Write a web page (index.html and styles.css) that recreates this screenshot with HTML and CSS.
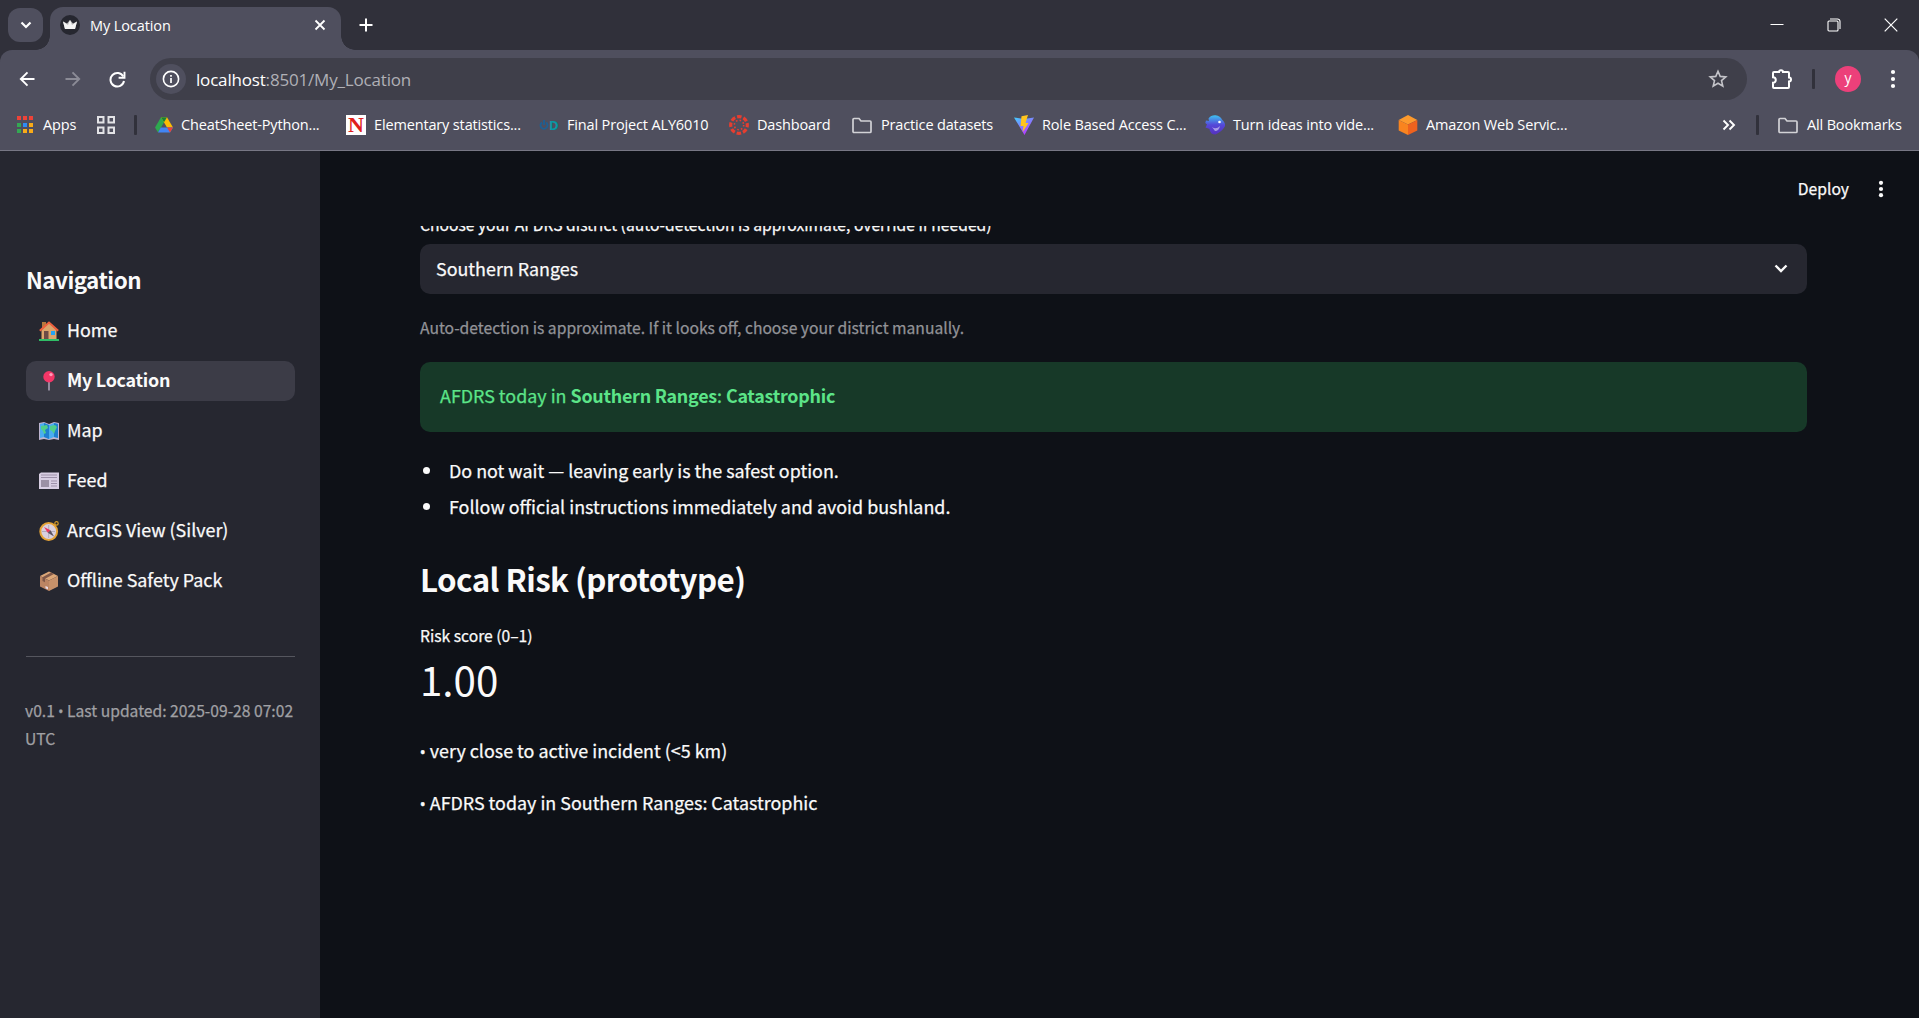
FILE: index.html
```html
<!DOCTYPE html>
<html lang="en">
<head>
<meta charset="utf-8">
<title>My Location</title>
<link rel="stylesheet" href="styles.css">
</head>
<body>
<div class="browser">
  <div class="tabstrip">
    <div class="tabsearch"><svg width="12" height="8" viewBox="0 0 12 8"><path d="M1.5 1.5 6 6l4.500-4.500" fill="none" stroke="#fff" stroke-width="2.200"/></svg></div>
    <div class="tab">
      <svg class="favicon" width="20" height="20" viewBox="0 0 20 20"><circle cx="10" cy="10" r="10" fill="#262730"/><path d="M3 6.500l4 2 3-3.500 3 3.500 4-2-2 7.500H5z" fill="#bbb"/><path d="M3 6.500L8 10l2-5 2 5 5-3.500-2 7.500H5z" fill="#f4f4f4"/></svg>
      <span class="tabtitle">My Location</span>
      <svg class="tabclose" width="12" height="12" viewBox="0 0 12 12"><path d="M1.500 1.500l9 9M10.500 1.500l-9 9" stroke="#fff" stroke-width="1.800"/></svg>
    </div>
    <svg class="newtab" width="14" height="14" viewBox="0 0 14 14"><path d="M7 .5v13M.5 7h13" stroke="#fff" stroke-width="2"/></svg>
    <div class="winctl">
      <svg width="14" height="14" viewBox="0 0 14 14"><path d="M.5 6.500h13" stroke="#fff"/></svg>
      <svg width="14" height="14" viewBox="0 0 14 14"><rect x="1" y="3" width="10" height="10" rx="1" fill="none" stroke="#fff" stroke-width="1.100"/><path d="M3 1h7.500a2.500 2.500 0 0 1 2.500 2.500V11" fill="none" stroke="#fff" stroke-width="1.100"/></svg>
      <svg width="14" height="14" viewBox="0 0 14 14"><path d="M.7.7l12.600 12.600M13.300.7L.7 13.300" stroke="#fff" stroke-width="1.200"/></svg>
    </div>
  </div>
  <div class="toolbar">
    <svg class="back" width="16" height="16" viewBox="0 0 16 16"><path d="M15.500 8H2M8.500 1.300L1.800 8l6.700 6.700" fill="none" stroke="#fff" stroke-width="1.900"/></svg>
    <svg class="forward" width="16" height="16" viewBox="0 0 16 16"><path d="M.5 8H14M7.500 1.300L14.200 8l-6.700 6.700" fill="none" stroke="#8b8b96" stroke-width="1.900"/></svg>
    <svg class="reload" width="17" height="17" viewBox="0 0 17 17"><path d="M14.300 5.500A6.800 6.800 0 1 0 15 10" fill="none" stroke="#fff" stroke-width="2"/><path d="M15.500.8v5.900H9.600" fill="none" stroke="#fff" stroke-width="1.900"/></svg>
    <div class="omnibox">
      <div class="siteinfo"><svg width="18" height="18" viewBox="0 0 18 18"><circle cx="9" cy="9" r="7.600" fill="none" stroke="#fff" stroke-width="1.600"/><path d="M9 8v5M9 5v1.800" stroke="#fff" stroke-width="1.700"/></svg></div>
      <span class="url"><b>localhost</b>:8501/My_Location</span>
      <svg class="star" width="20" height="20" viewBox="0 0 20 20"><path d="M10 2.200l2.200 5.200 5.600.5-4.300 3.700 1.300 5.500-4.800-2.900-4.800 2.900 1.300-5.500-4.300-3.700 5.600-.5z" fill="none" stroke="#c4c4c9" stroke-width="1.600"/></svg>
    </div>
    <svg class="ext" width="22" height="22" viewBox="0 0 22 22"><path d="M3 4h5a2 1.800 0 0 1 4 0h5q1 0 1 1v4.500a2 2 0 0 1 0 4V19q0 1-1 1H3q-1 0-1-1v-4.200a2.800 2.800 0 0 0 0-5.600V5q0-1 1-1z" fill="none" stroke="#fff" stroke-width="2"/></svg>
    <i class="vbar"></i>
    <div class="avatar">y</div>
    <svg class="dots" width="6" height="20" viewBox="0 0 6 20"><g fill="#fff"><circle cx="3" cy="3" r="2.100"/><circle cx="3" cy="10" r="2.100"/><circle cx="3" cy="17" r="2.100"/></g></svg>
  </div>
  <div class="bookmarks">
    <div class="bm"><svg width="18" height="18" viewBox="0 0 18 18"><path d="M1 0h4v4H1zM7 0h4v4H7zM13 0h4v4h-4z" fill="#ee4338"/><path d="M1 7h4v4H1zM1 13h4v4H1z" fill="#34a853"/><path d="M7 7h4v4H7z" fill="#2f8cf5"/><path d="M13 7h4v4h-4zM7 13h4v4H7zM13 13h4v4h-4z" fill="#f9ab18"/></svg><span>Apps</span></div>
    <div class="bm"><svg width="20" height="20" viewBox="0 0 20 20"><path d="M2 2h5.500v5.500H2zM12.500 2H18v5.500h-5.500zM2 12.500h5.500V18H2zM12.500 12.500H18V18h-5.500z" fill="none" stroke="#e3e3e6" stroke-width="2"/></svg></div>
    <i class="vbar"></i>
    <div class="bm drive"><svg width="20" height="20" viewBox="0 0 20 20"><path d="M7 2.200h6L7 12.500 4 17.500 1 12.400z" fill="#2da94f"/><path d="M7 2.200h6l6 10.200h-6z" fill="#fbbc04"/><path d="M7 2.200h6L10 7.300z" fill="#188038"/><path d="M6.800 12.400H19l-3 5.200H4z" fill="#4285f4"/><path d="M13 12.400h6l-3 5.200z" fill="#ea4335"/></svg><span>CheatSheet-Python...</span></div>
    <div class="bm"><span class="nicon">N</span><span>Elementary statistics...</span></div>
    <div class="bm"><span class="dicon"><svg width="10" height="12" viewBox="0 0 10 12"><path d="M3 3.500A3.500 3.500 0 1 0 7 3.500M5 1v5" fill="none" stroke="#205f91" stroke-width="1.900"/></svg>D</span><span>Final Project ALY6010</span></div>
    <div class="bm"><svg width="20" height="20" viewBox="0 0 20 20"><circle cx="10" cy="10" r="8.300" fill="none" stroke="#e63e30" stroke-width="3.200" stroke-dasharray="4.500 2.018" stroke-dashoffset="2.200"/><circle cx="10" cy="10" r="4.700" fill="none" stroke="#e63e30" stroke-width="1.600" stroke-dasharray="1.600 2.091"/></svg><span>Dashboard</span></div>
    <div class="bm"><svg width="22" height="20" viewBox="0 0 22 20"><path d="M3 3.500h5l2 2.500h9q1 0 1 1v9.500q0 1-1 1H3q-1 0-1-1v-12q0-1 1-1z" fill="none" stroke="#d2d2d6" stroke-width="1.700"/></svg><span>Practice datasets</span></div>
    <div class="bm"><svg width="20" height="20" viewBox="0 0 20 20"><defs><linearGradient id="v" x1="0" y1="0" x2=".6" y2="1"><stop stop-color="#41d1ff"/><stop offset="1" stop-color="#bd34fe"/></linearGradient></defs><path d="M0 2.500l10 1.500L20 2.500 10.500 20z" fill="url(#v)"/><path d="M14 0L7.500 1.300 6.500 11h3l-.8 6L14.500 8h-3L14 0z" fill="#ffc51d"/></svg><span>Role Based Access C...</span></div>
    <div class="bm"><svg width="20" height="20" viewBox="0 0 20 20"><defs><linearGradient id="f" x1="0" y1="0" x2="0" y2="1"><stop stop-color="#3ec2ef"/><stop offset=".5" stop-color="#5548d9"/><stop offset="1" stop-color="#5632bd"/></linearGradient></defs><path d="M3.500 3.500Q6 0 10.500.3q5 .7 6.500 4.200 4.500 4.500 2.500 7.500-3 5-9 7.500-5.500 0-6-5.500L.5 12.500 2 9.500 .3 8 1 5.500l3 .5z" fill="url(#f)"/><circle cx="14.500" cy="7" r="1.300" fill="#fff"/><path d="M7 12q4 3 8-1-1 5-5 5z" fill="#a89be9"/></svg><span>Turn ideas into vide...</span></div>
    <div class="bm"><svg width="20" height="20" viewBox="0 0 20 20"><path d="M10 0l9.300 5L10 9.500.7 5z" fill="#fd9a2d"/><path d="M.7 5L10 9.500V20L.7 15.500z" fill="#f9841f"/><path d="M19.300 5L10 9.500V20l9.300-4.500z" fill="#ee621e"/></svg><span>Amazon Web Servic...</span></div>
    <div class="bm"><svg width="14" height="12" viewBox="0 0 14 12"><path d="M1.500 1.500L6 6l-4.500 4.500M7.500 1.500L12 6l-4.500 4.500" fill="none" stroke="#fff" stroke-width="1.900"/></svg></div>
    <i class="vbar"></i>
    <div class="bm"><svg width="22" height="20" viewBox="0 0 22 20"><path d="M3 3.500h5l2 2.500h9q1 0 1 1v9.500q0 1-1 1H3q-1 0-1-1v-12q0-1 1-1z" fill="none" stroke="#d2d2d6" stroke-width="1.700"/></svg><span>All Bookmarks</span></div>
  </div>
</div>
<div class="app">
  <aside class="sidebar">
    <h2>Navigation</h2>
    <nav>
      <a><svg width="20" height="20" viewBox="0 0 20 20"><path d="M3 1h4v6H3z" fill="#b5793f"/><path d="M2.500 9L10 2l7.500 7v9h-15z" fill="#dca56c"/><path d="M.8 9.800L10 1.500l9.200 8.300" fill="none" stroke="#f0603e" stroke-width="2"/><path d="M5 10h4.500v8H5z" fill="#6d4b46"/><path d="M12 10h4v4h-4z" fill="#25a4f4"/><path d="M0 18h20v2H0z" fill="#2fbd66"/></svg><span>Home</span></a>
      <a class="active"><svg width="20" height="20" viewBox="0 0 20 20"><path d="M10 10v9.500" stroke="#a99fb4" stroke-width="1.600"/><circle cx="10" cy="5.800" r="5.700" fill="#f33667"/><circle cx="12" cy="3.600" r="1.700" fill="#ff9cb8"/></svg><span>My Location</span></a>
      <a><svg width="20" height="20" viewBox="0 0 20 20"><path d="M0 2l5-1 5 2 5-2 5 1v17l-5-1-5 1-5-1-5 1z" fill="#bdb4cf"/><path d="M1 3l4-1 5 2 5-2 4 1v14l-4-1-5 2-5-2-4 1z" fill="#4aaef0"/><path d="M5 2l5 2v14l-5-2zM15 2l4 1v14l-4-1z" fill="#1f7fd0"/><path d="M2 5l6-1 1 3-3 2 1 3-2 1-1-3-2-2zM11 5l5-1 2 2-2 4-1 3-2-3-2-1z" fill="#50cf8b"/></svg><span>Map</span></a>
      <a><svg width="20" height="20" viewBox="0 0 20 20"><path d="M0 3l2-1.500h18V18H0z" fill="#d8cfe3"/><path d="M2 4h16M2 6.500h16M12 10h6M12 12.500h6M12 15h6" stroke="#9d91aa" stroke-width="1.200"/><path d="M2 9h8v7H2z" fill="#9b91a5"/></svg><span>Feed</span></a>
      <a><svg width="20" height="20" viewBox="0 0 20 20"><circle cx="17.500" cy="2.400" r="1.700" fill="none" stroke="#d89b27" stroke-width="1.200"/><circle cx="9.700" cy="10.500" r="8.400" fill="#d9d0df" stroke="#e5a337" stroke-width="2"/><path d="M9.700 4v13M3 10.500h13" stroke="#a99fae" stroke-width=".8"/><path d="M5 6l6.500 3.300-2.700 2.500z" fill="#ee355f"/><path d="M15 15.500l-6.200-3.700 2.700-2.500z" fill="#5c5360"/></svg><span>ArcGIS View (Silver)</span></a>
      <a><svg width="20" height="20" viewBox="0 0 20 20"><path d="M10 .5L19 5l-9 4.500L1 5z" fill="#dca778"/><path d="M1 5l9 4.500V20l-9-4.500z" fill="#bc8563"/><path d="M19 5l-9 4.500V20l9-4.500z" fill="#c7916a"/><path d="M12 1.500L15 3 6 7.700v3.500L3.500 10V6.300z" fill="#805848"/><path d="M6.500 15l2.500 1v2.500l-2.500-1.200z" fill="#eadbe6"/></svg><span>Offline Safety Pack</span></a>
    </nav>
    <hr>
    <p class="version">v0.1 <span class="dot">•</span> Last updated: 2025-09-28 07:02<br>UTC</p>
  </aside>
  <main>
    <header><span>Deploy</span><svg width="6" height="20" viewBox="0 0 6 20"><g fill="#fafafa"><circle cx="3" cy="3.800" r="2.100"/><circle cx="3" cy="10" r="2.100"/><circle cx="3" cy="16.200" r="2.100"/></g></svg></header>
    <div class="scroll">
      <div class="label">Choose your AFDRS district (auto-detection is approximate, override if needed)</div>
      <div class="select"><span>Southern Ranges</span><svg width="14" height="9" viewBox="0 0 14 9"><path d="M1.500 1.500L7 7l5.500-5.500" fill="none" stroke="#fafafa" stroke-width="2.400"/></svg></div>
      <p class="caption">Auto-detection is approximate. If it looks off, choose your district manually.</p>
      <div class="alert">AFDRS today in <b>Southern Ranges</b>: <b>Catastrophic</b></div>
      <ul>
        <li>Do not wait — leaving early is the safest option.</li>
        <li>Follow official instructions immediately and avoid bushland.</li>
      </ul>
      <h1>Local Risk (prototype)</h1>
      <div class="mlabel">Risk score (0–1)</div>
      <div class="mvalue">1.00</div>
      <p class="reason"><span class="dot">•</span> very close to active incident (&lt;5 km)</p>
      <p class="reason"><span class="dot">•</span> AFDRS today in Southern Ranges: Catastrophic</p>
    </div>
  </main>
</div>
</body>
</html>
```
FILE: styles.css
```css
* { box-sizing: border-box; }
body { margin: 0; width: 1919px; height: 1018px; overflow: hidden; display: flex; flex-direction: column; background: #0e1117; }
svg { display: block; flex: none; }
h1, h2, p, ul { margin: 0; padding: 0; }

.browser { height: 151px; flex: none; background: #30303a; border-bottom: 1px solid #777784; font-family: "Open Sans", "Noto Sans", sans-serif; font-size: 14.5px; color: #fff; }
.tabstrip { height: 50px; display: flex; align-items: center; }
.tabsearch { position: relative; z-index: 1; width: 35px; height: 34px; margin-left: 8px; border-radius: 12px; background: #4f4f5e; display: flex; align-items: center; justify-content: center; }
.tab { position: relative; width: 291px; height: 43px; margin: 7px 0 0 7px; padding: 0 15px 7px 10px; border-radius: 13px 13px 0 0; background: #4f4f5e; display: flex; align-items: center; }
.tab::before, .tab::after { content: ""; position: absolute; bottom: 0; width: 14px; height: 14px; }
.tab::before { left: -14px; background: radial-gradient(circle at 0 0, #30303a 13.500px, #4f4f5e 14px); }
.tab::after { right: -14px; background: radial-gradient(circle at 100% 0, #30303a 13.500px, #4f4f5e 14px); }
.tabtitle { margin-left: 10px; flex: 1; letter-spacing: -.1px; }
.newtab { margin-left: 18px; }
.winctl { margin-left: auto; margin-right: 21px; display: flex; gap: 43px; }
.toolbar { height: 58px; background: #4f4f5e; border-radius: 12px 12px 0 0; display: flex; align-items: center; }
.back { margin-left: 19px; }
.forward { margin-left: 30px; }
.reload { margin-left: 28px; }
.omnibox { width: 1597px; height: 42px; margin-left: 24px; border-radius: 21px; background: #3f3f4a; display: flex; align-items: center; }
.siteinfo { width: 30px; height: 30px; margin-left: 6px; border-radius: 50%; background: #4f4f5e; display: flex; align-items: center; justify-content: center; }
.url { margin-left: 10px; font-size: 17px; letter-spacing: -.18px; color: #b0b0b6; flex: 1; }
.url b { font-weight: 400; color: #fff; }
.star { margin-right: 19px; }
.ext { margin-left: 24px; }
.vbar { width: 3px; height: 20px; border-radius: 1px; background: #31313b; }
.toolbar .vbar { margin-left: 19px; }
.avatar { width: 26px; height: 26px; margin-left: 20px; border-radius: 50%; background: #ec407a; text-align: center; line-height: 23px; font-size: 14px; }
.dots { margin-left: 29px; }
.bookmarks { height: 42px; padding: 0 0 9px 16px; background: #4f4f5e; display: grid; grid-template-columns: 80px 38px 20px 192px 193px 190px 122px 163px 191px 193px 324px 34px 21px 1fr; align-items: center; }
.bm { display: flex; align-items: center; gap: 8px; height: 20px; white-space: nowrap; letter-spacing: -.15px; }
.bm:first-child { gap: 9px; }
.drive { gap: 7px; }
.nicon { width: 20px; height: 20px; background: #fff; color: #e0201b; font: bold 22px/20px "Liberation Serif", serif; letter-spacing: 0; text-align: center; }
.dicon { width: 20px; display: flex; align-items: center; color: #0899a5; font-weight: 700; font-size: 13px; letter-spacing: 0; }

.app { flex: 1; display: flex; font-family: "Noto Sans CJK SC", sans-serif; font-size: 17.900px; color: #fafafa; -webkit-text-stroke: .25px; }
.app b, .active { letter-spacing: -.25px; }
.app h1, .app h2, .app b, .active { -webkit-text-stroke: 0; }
.sidebar { width: 320px; padding: 111px 25px 0 26px; background: #262730; }
.sidebar h2 { font-size: 22.400px; line-height: 34px; font-weight: 700; letter-spacing: -.5px; }
.sidebar nav { margin-top: 15px; display: flex; flex-direction: column; gap: 10px; }
.sidebar a { height: 40px; padding-left: 13px; border-radius: 10px; display: flex; align-items: center; gap: 8px; }
.sidebar a span { height: 40px; line-height: 36px; }
.sidebar a.active { background: #3c3c47; font-weight: 700; }
.sidebar hr { height: 1px; margin: 55px 0 0; border: 0; background: #55565e; }
.version { margin: 40px 0 0 -1px; font-size: 15.660px; line-height: 28px; color: #a0a0a4; white-space: nowrap; }
.dot { display: inline-block; width: .34em; font-family: "Open Sans", sans-serif; font-size: .95em; line-height: 1; text-indent: -.03em; }
main { flex: 1; display: flex; flex-direction: column; }
header { height: 75px; padding-right: 35px; flex: none; display: flex; align-items: center; justify-content: flex-end; gap: 29px; font-size: 15.660px; }
.scroll { height: 792px; padding: 0 112px 0 100px; overflow: hidden; }
.label { margin-top: -14px; height: 32px; font-size: 15.660px; line-height: 26px; }
.select { height: 50px; padding: 0 19px 3px 16px; border-radius: 10px; background: #262730; display: flex; align-items: center; justify-content: space-between; }
.select svg { margin-top: 2px; }
.caption { margin-top: 20px; font-size: 15.660px; line-height: 28px; color: #929397; }
.alert { height: 70px; margin-top: 20px; padding-left: 20px; border-radius: 10px; background: #173928; color: #5ce488; line-height: 67px; }
ul { margin-top: 20px; list-style: none; }
li { height: 36px; line-height: 36px; display: flex; align-items: center; }
li::before { content: ""; width: 7px; height: 7px; margin: 0 19px 0 3px; border-radius: 50%; background: #fafafa; }
h1 { margin-top: 34px; font-size: 31.300px; line-height: 42px; font-weight: 700; letter-spacing: -.56px; }
.mlabel { margin-top: 23px; font-size: 15.660px; line-height: 26px; }
.mvalue { margin-top: 2px; font-size: 40.300px; line-height: 56px; -webkit-text-stroke: 0; }
.reason { margin-top: 22px; line-height: 30px; }
.mvalue + .reason { margin-top: 28px; }
```
